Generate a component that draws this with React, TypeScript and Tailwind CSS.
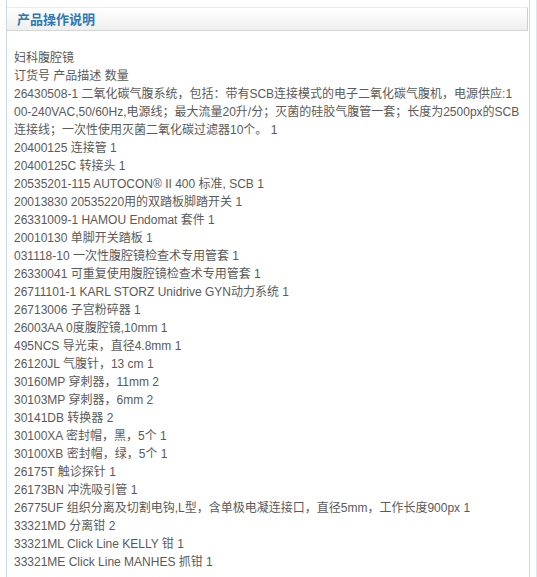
import * as React from "react"

const lines: string[][] = [
  ["妇科腹腔镜"],
  ["订货号 产品描述 数量"],
  [
    "26430508-1 二氧化碳气腹系统，包括：带有SCB连接模式的电子二氧化碳气腹机，电源供应:1",
    "00-240VAC,50/60Hz,电源线；最大流量20升/分；灭菌的硅胶气腹管一套；长度为2500px的SCB",
    "连接线；一次性使用灭菌二氧化碳过滤器10个。 1",
  ],
  ["20400125 连接管 1"],
  ["20400125C 转接头 1"],
  ["20535201-115 AUTOCON® II 400 标准, SCB 1"],
  ["20013830 20535220用的双踏板脚踏开关 1"],
  ["26331009-1 HAMOU Endomat 套件 1"],
  ["20010130 单脚开关踏板 1"],
  ["031118-10 一次性腹腔镜检查术专用管套 1"],
  ["26330041 可重复使用腹腔镜检查术专用管套 1"],
  ["26711101-1 KARL STORZ Unidrive GYN动力系统 1"],
  ["26713006 子宫粉碎器 1"],
  ["26003AA 0度腹腔镜,10mm 1"],
  ["495NCS 导光束，直径4.8mm 1"],
  ["26120JL 气腹针，13 cm 1"],
  ["30160MP 穿刺器，11mm 2"],
  ["30103MP 穿刺器，6mm 2"],
  ["30141DB 转换器 2"],
  ["30100XA 密封帽，黑，5个 1"],
  ["30100XB 密封帽，绿，5个 1"],
  ["26175T 触诊探针 1"],
  ["26173BN 冲洗吸引管 1"],
  ["26775UF 组织分离及切割电钩,L型，含单极电凝连接口，直径5mm，工作长度900px 1"],
  ["33321MD 分离钳 2"],
  ["33321ML Click Line KELLY 钳 1"],
  ["33321ME Click Line MANHES 抓钳 1"],
]

export default function App() {
  return (
    <div className="min-h-[577px] bg-white flex">
      <div className="w-[530px] pl-[6px] flex">
        <div className="flex-1 border-x border-[#c9dbea] pt-[7px]">
          <div className="h-[24px] border-t border-b border-t-[#ececec] border-b-[#d6d6d6] border-r border-r-[#cfcfcf] mr-px bg-gradient-to-b from-white to-[#efefef] pl-[10px] flex items-center">
            <h3
              className="text-[13px] font-bold text-[#2f78b8] leading-none"
              style={{ fontFamily: '"Liberation Sans", "Noto Sans CJK SC", sans-serif' }}
            >
              产品操作说明
            </h3>
          </div>
          <div
            className="pl-[7px] pr-[4px] pt-[18px] text-[12px] leading-[18px] text-[#5a5a5a] whitespace-nowrap"
            style={{ fontFamily: '"Liberation Sans", "Noto Sans CJK SC", sans-serif' }}
          >
            {lines.map((parts, i) => (
              <p key={i}>
                {parts.map((part, j) => (
                  <React.Fragment key={j}>
                    {j > 0 && <br />}
                    {part}
                  </React.Fragment>
                ))}
              </p>
            ))}
          </div>
        </div>
      </div>
      <div className="w-[7px] border-r border-[#dde6ee]" />
    </div>
  )
}
